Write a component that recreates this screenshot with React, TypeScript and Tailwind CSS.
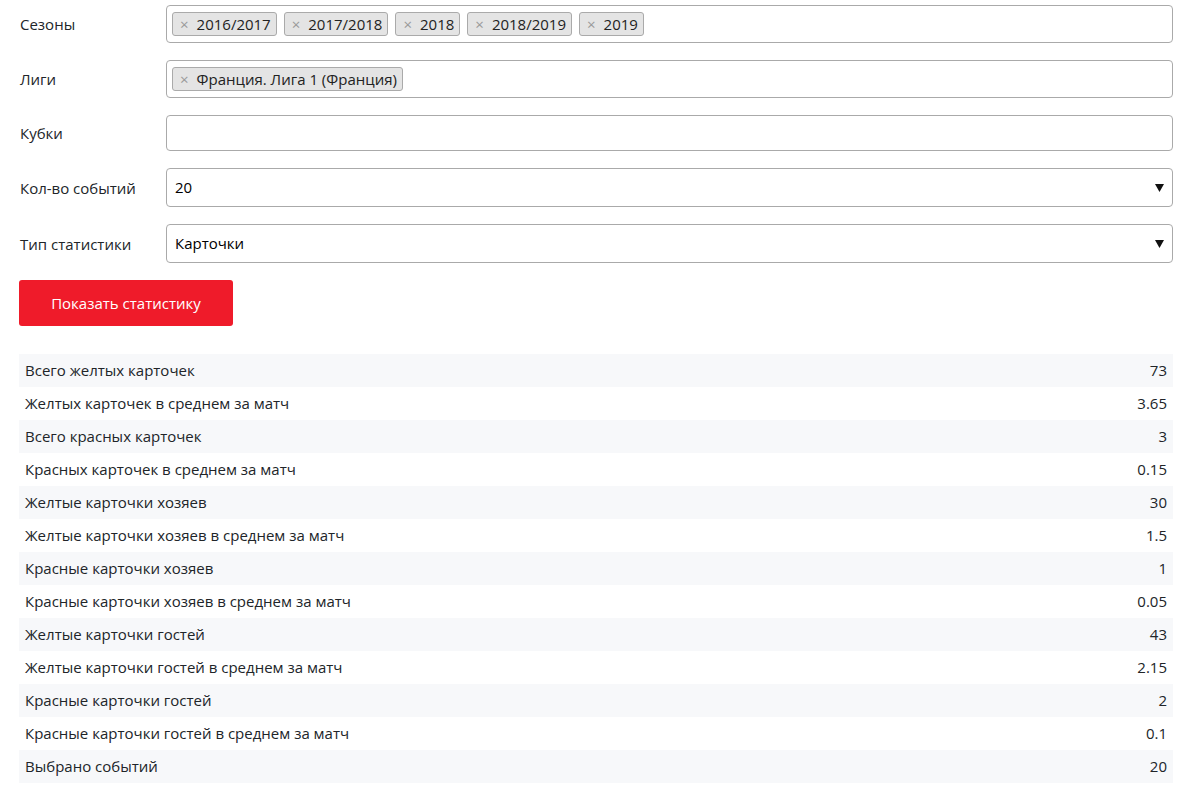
import React from "react";

const seasons = ["2016/2017", "2017/2018", "2018", "2018/2019", "2019"];

const rows: [string, string][] = [
  ["Всего желтых карточек", "73"],
  ["Желтых карточек в среднем за матч", "3.65"],
  ["Всего красных карточек", "3"],
  ["Красных карточек в среднем за матч", "0.15"],
  ["Желтые карточки хозяев", "30"],
  ["Желтые карточки хозяев в среднем за матч", "1.5"],
  ["Красные карточки хозяев", "1"],
  ["Красные карточки хозяев в среднем за матч", "0.05"],
  ["Желтые карточки гостей", "43"],
  ["Желтые карточки гостей в среднем за матч", "2.15"],
  ["Красные карточки гостей", "2"],
  ["Красные карточки гостей в среднем за матч", "0.1"],
  ["Выбрано событий", "20"],
];

function Tag({ text }: { text: string }) {
  return (
    <span className="flex items-center h-[24px] mr-[7px] pl-[7px] pr-[5px] bg-[#e4e4e4] border border-[#aaaaaa] rounded-[3px] text-[15px] text-[#222]">
      <span className="text-[#999] text-[15px] mr-[8px]">×</span>
      {text}
    </span>
  );
}

function Label({ children }: { children: React.ReactNode }) {
  return <div className="w-[146px] shrink-0 text-[15px] text-[#212529] pt-[1px]">{children}</div>;
}

function Arrow() {
  return (
    <svg width="9" height="8" viewBox="0 0 9 8" className="ml-auto">
      <path d="M0 0 L9 0 L4.5 8 Z" fill="#111" />
    </svg>
  );
}

export default function App() {
  return (
    <div
      className="w-[1179px] h-[789px] bg-white pl-[19px] pr-[6px] pt-[5px]"
      style={{ fontFamily: '"Open Sans", "Noto Sans", sans-serif' }}
    >
      <div className="flex items-center pl-[1px]">
        <Label>Сезоны</Label>
        <div className="flex-1 h-[38px] border border-[#aaaaaa] rounded-[4px] flex items-center pl-[5px]">
          {seasons.map((s) => (
            <Tag key={s} text={s} />
          ))}
        </div>
      </div>
      <div className="flex items-center pl-[1px] mt-[17px]">
        <Label>Лиги</Label>
        <div className="flex-1 h-[38px] border border-[#aaaaaa] rounded-[4px] flex items-center pl-[5px]">
          <Tag text="Франция. Лига 1 (Франция)" />
        </div>
      </div>
      <div className="flex items-center pl-[1px] mt-[17px]">
        <Label>Кубки</Label>
        <div className="flex-1 h-[36px] border border-[#aaaaaa] rounded-[4px]" />
      </div>
      <div className="flex items-center pl-[1px] mt-[17px]">
        <Label>Кол-во событий</Label>
        <div className="flex-1 h-[39px] border border-[#aaaaaa] rounded-[4px] flex items-center pl-[8px] pr-[8px] text-[15px] text-black">
          20
          <Arrow />
        </div>
      </div>
      <div className="flex items-center pl-[1px] mt-[17px]">
        <Label>Тип статистики</Label>
        <div className="flex-1 h-[39px] border border-[#aaaaaa] rounded-[4px] flex items-center pl-[8px] pr-[8px] text-[15px] text-black">
          Карточки
          <Arrow />
        </div>
      </div>
      <button className="mt-[17px] w-[214px] h-[46px] bg-[#ef1b2a] rounded-[3px] text-white text-[15px] flex items-center justify-center">
        Показать статистику
      </button>
      <div className="mt-[28px]">
        {rows.map(([k, v], i) => (
          <div
            key={k}
            className={`flex items-center justify-between h-[33px] px-[6px] text-[15px] text-[#212529] ${
              i % 2 === 0 ? "bg-[#f7f8fa]" : "bg-white"
            }`}
          >
            <span>{k}</span>
            <span>{v}</span>
          </div>
        ))}
      </div>
    </div>
  );
}
